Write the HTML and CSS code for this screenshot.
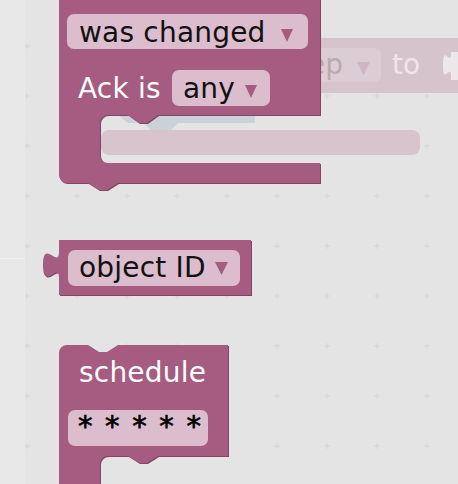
FILE: index.html
```html
<!DOCTYPE html>
<html>
<head>
<meta charset="utf-8">
<link rel="stylesheet" href="styles.css">
</head>
<body>
<div class="workspace">
<svg class="canvas" width="458" height="484" viewBox="0 0 458 484" xmlns="http://www.w3.org/2000/svg">
  <defs>
    <pattern id="grid" x="2" y="21" width="50" height="50" patternUnits="userSpaceOnUse">
      <path class="grid-cross" d="M22,25 H28 M25,22 V28"/>
    </pattern>
  </defs>
  <rect class="bg" x="0" y="0" width="458" height="484"/>
  <rect x="0" y="0" width="458" height="484" fill="url(#grid)"/>
  <rect class="strip" x="0" y="0" width="25" height="484"/>
  <rect class="strip-line" x="0" y="258" width="25" height="1"/>

  <!-- faded dragged block, top right -->
  <g class="ghost">
    <rect class="ghost-body" x="255" y="38" width="215" height="55"/>
    <rect class="ghost-field" x="245" y="48" width="136" height="34" rx="6"/>
    <text class="ghost-text" x="343" y="74" text-anchor="end">step</text>
    <polygon class="ghost-arrow" points="357,62 370,62 363.5,75"/>
    <text class="ghost-label" x="392" y="74">to</text>
    <path class="ghost-tab" d="M462,52 H451 V54 c0,13 -8,-11 -8,11 s8,-3 8,11 V80 H462 Z"/>
  </g>

  <!-- ghost inside statement mouth -->
  <rect class="ghost-bar" x="101" y="130" width="319" height="25" rx="8"/>
  <path class="ghost-blue" d="M118,115 H255 V123 H178 l-7,7 h-20 l-7,-7 H128 Z"/>

  <!-- block 1: trigger -->
  <g class="block">
    <path class="shadow" transform="translate(1,1)" d="M59,-20 H320 V115 H158 l-11,8 h-8 l-11,-8 H108 a8,8 0 0 0 -8,8 V155 a8,8 0 0 0 8,8 H320 V183 H118 l-11,7 h-8 l-11,-7 H67 a8,8 0 0 1 -8,-8 Z"/>
    <path class="body" d="M59,-20 H320 V115 H158 l-11,8 h-8 l-11,-8 H108 a8,8 0 0 0 -8,8 V155 a8,8 0 0 0 8,8 H320 V183 H118 l-11,7 h-8 l-11,-7 H67 a8,8 0 0 1 -8,-8 Z"/>
    <rect class="field" x="67" y="14" width="241" height="35" rx="7"/>
    <text class="field-text" x="79" y="42">was changed</text>
    <polygon class="arrow" points="281,29 293,29 287,42"/>
    <text class="label" x="78" y="98">Ack is</text>
    <rect class="field" x="172" y="70" width="98" height="36" rx="7"/>
    <text class="field-text" x="183" y="98">any</text>
    <polygon class="arrow" points="245,85 257,85 251,98"/>
  </g>

  <!-- block 2: object ID -->
  <g class="block">
    <path class="shadow" transform="translate(1,1)" d="M251,240 H59 V252 c0,17 -16,-14 -16,13 s16,-4 16,13 V295 H251 Z"/>
    <path class="body" d="M251,240 H59 V252 c0,17 -16,-14 -16,13 s16,-4 16,13 V295 H251 Z"/>
    <rect class="field" x="68" y="250" width="172" height="36" rx="7"/>
    <text class="field-text" x="79" y="277">object ID</text>
    <polygon class="arrow" points="215,262 228,262 221.5,275"/>
  </g>

  <!-- block 3: schedule -->
  <g class="block">
    <path class="shadow" transform="translate(1,1)" d="M59,353 a8,8 0 0 1 8,-8 H88 l11,7 h8 l11,-7 H228 V456 H158 l-11,7 h-8 l-11,-7 H108 a8,8 0 0 0 -8,8 V500 H59 Z"/>
    <path class="body" d="M59,353 a8,8 0 0 1 8,-8 H88 l11,7 h8 l11,-7 H228 V456 H158 l-11,7 h-8 l-11,-7 H108 a8,8 0 0 0 -8,8 V500 H59 Z"/>
    <text class="label" x="79" y="382">schedule</text>
    <rect class="field" x="68" y="410" width="140" height="36" rx="7"/>
    <text class="field-text stars" x="78" y="436">* * * * *</text>
  </g>
</svg>
</div>
</body>
</html>
```
FILE: styles.css
```css
html, body {
  margin: 0;
  padding: 0;
  width: 458px;
  height: 484px;
  overflow: hidden;
  background: #e4e4e4;
}
.workspace {
  width: 458px;
  height: 484px;
}
.canvas {
  display: block;
}
.bg { fill: #e4e4e4; }
.strip { fill: #e8e8e8; }
.strip-line { fill: #f0f0f0; }
.grid-cross {
  stroke: #d6d6d6;
  stroke-width: 1;
  fill: none;
}
.block .body { fill: #a65b80; }
.block .shadow { fill: #834564; }
.field { fill: #dcbdcd; }
.field-text {
  font-family: "DejaVu Sans", sans-serif;
  font-size: 28px;
  letter-spacing: 0.2px;
  fill: #111;
}
.label {
  font-family: "DejaVu Sans", sans-serif;
  font-size: 28px;
  letter-spacing: 0.2px;
  fill: #fff;
}
.stars {
  font-size: 29px;
  word-spacing: 3px;
  fill: #000;
  stroke: #000;
  stroke-width: 0.7px;
}
.arrow { fill: #a65b80; }
.ghost-body { fill: #d6c4cd; }
.ghost-field { fill: #dccdd4; }
.ghost-text {
  font-family: "DejaVu Sans", sans-serif;
  font-size: 28px;
  fill: #b5abb0;
}
.ghost-label {
  font-family: "DejaVu Sans", sans-serif;
  font-size: 28px;
  fill: #eee6ea;
}
.ghost-arrow { fill: #cfb6c3; }
.ghost-tab { fill: #ece8ea; }
.ghost-bar { fill: #d7c4cd; }
.ghost-blue { fill: #c9d2d9; }
```
